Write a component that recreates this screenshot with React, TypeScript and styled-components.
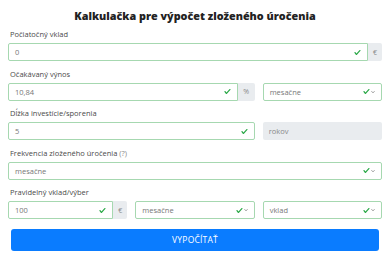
import styled, { createGlobalStyle } from "styled-components";

const GlobalStyle = createGlobalStyle`
  * { box-sizing: border-box; }
  body {
    margin: 0;
    background: #ffffff;
    font-family: "Open Sans", "Liberation Sans", sans-serif;
  }
`;

const Page = styled.div`
  width: 390px;
  padding: 10px 8px 0 8px;
`;

const Title = styled.h1`
  margin: 0 0 7px;
  font-size: 10.8px;
  line-height: 12px;
  font-weight: 800;
  text-align: center;
  color: #222;
`;

const Grid = styled.div`
  display: grid;
  grid-template-columns: repeat(3, 1fr);
  column-gap: 8px;
`;

const Group = styled.div<{ $span?: number }>`
  grid-column: span ${(p) => p.$span ?? 3};
  margin-bottom: 7.5px;
`;

const Label = styled.div`
  font-size: 7.5px;
  line-height: 10px;
  color: #4a4a4a;
  margin-bottom: 4px;
  padding-left: 2px;
  white-space: nowrap;
`;

const Hint = styled.span`
  color: #888;
`;

const Row = styled.div`
  display: grid;
  grid-template-columns: repeat(3, 1fr);
  column-gap: 8px;
`;

const InputGroup = styled.div<{ $span?: number }>`
  display: flex;
  grid-column: span ${(p) => p.$span ?? 1};
  height: 18px;
`;

const Field = styled.div<{ $joined?: boolean }>`
  flex: 1;
  display: flex;
  align-items: center;
  justify-content: space-between;
  height: 18px;
  padding: 0 6px 0 6px;
  border: 1px solid #a6d8b0;
  border-radius: ${(p) => (p.$joined ? "2px 0 0 2px" : "2px")};
  font-size: 7.5px;
  color: #777;
  background: #fff;
`;

const Addon = styled.div<{ $w: number }>`
  width: ${(p) => p.$w}px;
  display: flex;
  align-items: center;
  justify-content: center;
  background: #e9ecef;
  border-radius: 0 2px 2px 0;
  font-size: 7px;
  color: #888;
`;

const Disabled = styled.div`
  display: flex;
  align-items: center;
  height: 18px;
  padding: 0 6px;
  background: #e9ecef;
  border-radius: 2px;
  font-size: 7.5px;
  color: #888;
`;

const Icons = styled.span`
  display: flex;
  align-items: center;
  gap: 1px;
`;

const Button = styled.button`
  display: block;
  width: calc(100% - 6px);
  margin: 2px 3px 0;
  height: 22px;
  border: 0;
  border-radius: 3px;
  background: #0a7cff;
  color: #fff;
  font-family: "Open Sans", "Liberation Sans", sans-serif;
  font-size: 8.5px;
  letter-spacing: 0.2px;
`;

function Check() {
  return (
    <svg width="7" height="7" viewBox="0 0 8 8">
      <path
        fill="#28a745"
        d="M2.3 6.73L.6 4.53c-.4-1.04.46-1.4 1.1-.8l1.1 1.4 3.4-3.8c.6-.63 1.6-.27 1.2.7l-4 4.6c-.43.5-.8.4-1.1.1z"
      />
    </svg>
  );
}

function Chevron() {
  return (
    <svg width="4" height="4" viewBox="0 0 8 8">
      <path d="M1 2.5l3 3 3-3" fill="none" stroke="#555" strokeWidth="1.3" />
    </svg>
  );
}

function TextInput({ value, joined }: { value: string; joined?: boolean }) {
  return (
    <Field $joined={joined}>
      <span>{value}</span>
      <Check />
    </Field>
  );
}

function Select({ value }: { value: string }) {
  return (
    <Field>
      <span>{value}</span>
      <Icons>
        <Check />
        <Chevron />
      </Icons>
    </Field>
  );
}

export default function App() {
  return (
    <>
      <GlobalStyle />
      <Page>
        <Title>Kalkulačka pre výpočet zloženého úročenia</Title>
        <Grid>
          <Group>
            <Label>Počiatočný vklad</Label>
            <Row>
              <InputGroup $span={3}>
                <TextInput value="0" joined />
                <Addon $w={14}>€</Addon>
              </InputGroup>
            </Row>
          </Group>
          <Group>
            <Label>Očakávaný výnos</Label>
            <Row>
              <InputGroup $span={2}>
                <TextInput value="10,84" joined />
                <Addon $w={17}>%</Addon>
              </InputGroup>
              <InputGroup>
                <Select value="mesačne" />
              </InputGroup>
            </Row>
          </Group>
          <Group>
            <Label>Dĺžka investície/sporenia</Label>
            <Row>
              <InputGroup $span={2}>
                <TextInput value="5" />
              </InputGroup>
              <Disabled>rokov</Disabled>
            </Row>
          </Group>
          <Group>
            <Label>
              Frekvencia zloženého úročenia <Hint>(?)</Hint>
            </Label>
            <Row>
              <InputGroup $span={3}>
                <Select value="mesačne" />
              </InputGroup>
            </Row>
          </Group>
          <Group>
            <Label>Pravidelný vklad/výber</Label>
            <Row>
              <InputGroup>
                <TextInput value="100" joined />
                <Addon $w={14}>€</Addon>
              </InputGroup>
              <InputGroup>
                <Select value="mesačne" />
              </InputGroup>
              <InputGroup>
                <Select value="vklad" />
              </InputGroup>
            </Row>
          </Group>
        </Grid>
        <Button>VYPOČÍTAŤ</Button>
      </Page>
    </>
  );
}
